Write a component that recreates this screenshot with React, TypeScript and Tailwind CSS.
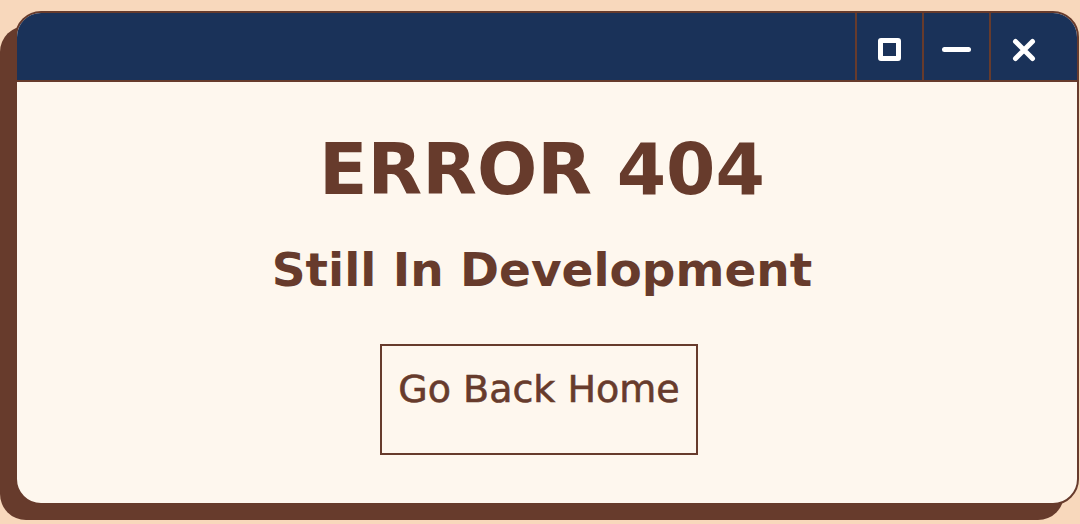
import React from 'react';

const brown = '#673b2c';

const App: React.FC = () => {
    return (
        <div className="min-h-screen bg-[#f8d8bc] pl-[15px] pt-[11px] pr-[1px] pb-[19px] font-['DejaVu_Sans',sans-serif]">
            <div className="h-[494px] rounded-[26px] border-2 border-[#673b2c] bg-[#fef7ee] shadow-[-15px_15px_0_0_#673b2c] overflow-hidden flex flex-col">
                {/* Title bar */}
                <div className="h-[69px] shrink-0 bg-[#1a3259] border-b-2 border-[#673b2c] flex justify-end pr-[21px]">
                    <div className="w-[67px] border-l-2 border-[#673b2c] flex items-center justify-center pt-[6px]">
                        <div className="w-[23px] h-[23px] border-[5px] border-white rounded-[3px]" />
                    </div>
                    <div className="w-[67px] border-l-2 border-[#673b2c] flex items-center justify-center pt-[6px]">
                        <div className="w-[29px] h-[5px] bg-white rounded-full" />
                    </div>
                    <div className="w-[67px] border-l-2 border-[#673b2c] flex items-center justify-center pt-[6px]">
                        <svg width="24" height="24" viewBox="0 0 24 24" fill="none" stroke="white" strokeWidth="5" strokeLinecap="round">
                            <path d="M3.5 3.5 L20.5 20.5 M20.5 3.5 L3.5 20.5" />
                        </svg>
                    </div>
                </div>

                {/* Content */}
                <div className="flex-1 flex flex-col items-center pt-[52px] pr-[10px] text-[#673b2c]">
                    <h1 className="text-[71px] leading-none font-bold">ERROR 404</h1>
                    <h2 className="mt-[41px] text-[47px] leading-none font-bold">Still In Development</h2>
                    <button
                        className="mt-[51px] mr-[6px] w-[318px] h-[111px] border-2 flex justify-center pt-[24px] text-[38px] leading-none font-medium [-webkit-text-stroke:0.6px_#673b2c]"
                        style={{ borderColor: brown }}
                    >
                        Go Back Home
                    </button>
                </div>
            </div>
        </div>
    );
};

export default App;
